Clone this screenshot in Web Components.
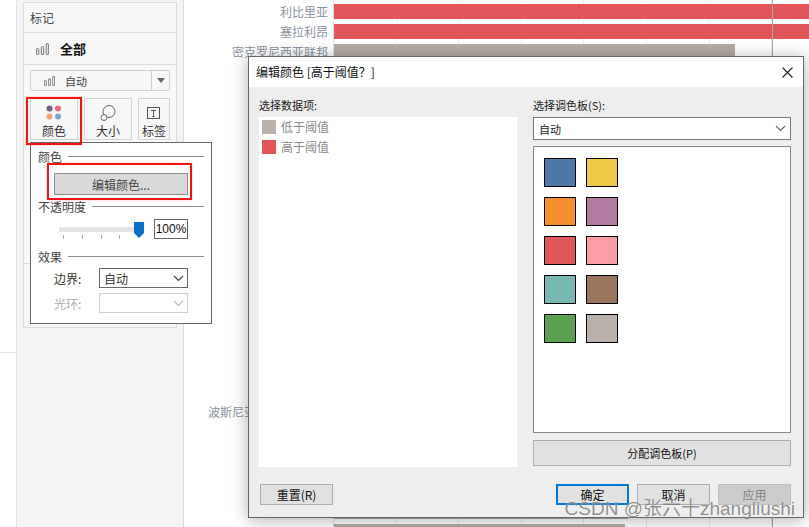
<!DOCTYPE html>
<html lang="zh">
<head>
<meta charset="utf-8">
<title>编辑颜色</title>
<style>
    html, body { margin: 0; height: 100%; overflow: hidden; background: #fff; }
    body { font-family: "Noto Sans CJK SC", "Liberation Sans", sans-serif; font-size: 12px; color: #222; }
</style>
</head>
<body>
<viz-workspace>
    <marks-panel slot="panel"></marks-panel>
    <bar-chart slot="chart"></bar-chart>
    <color-popup slot="popup"></color-popup>
    <edit-dialog slot="dialog"></edit-dialog>
</viz-workspace>

<script>
const BAR_ICON = `<svg width="13" height="12" viewBox="0 0 13 12" fill="none" stroke="#8a8a8a" stroke-width="1.2">
    <rect x="0.6" y="5.5" width="2.2" height="6" rx="1.1"/><rect x="5.4" y="3.5" width="2.2" height="8" rx="1.1"/><rect x="10.2" y="0.6" width="2.2" height="10.9" rx="1.1"/></svg>`;

function chevron(color) {
    return `<svg width="11" height="7" viewBox="0 0 11 7" fill="none" stroke="${color}" stroke-width="1.2"><path d="M1 1l4.5 4.5L10 1"/></svg>`;
}

class VizWorkspace extends HTMLElement {
    constructor() {
        super();
        this.attachShadow({ mode: 'open' });
        this.shadowRoot.innerHTML = `
            <style>
                :host { display: flex; position: relative; width: 809px; height: 527px; overflow: hidden; background: #fff; }
                .gutter { width: 16px; flex: none; position: relative; }
                .gutter i { position: absolute; left: 0; right: 0; top: 352px; border-top: 1px solid #e6e6e6; }
                .over { position: absolute; }
                .popup { left: 30px; top: 142px; }
                .dialog { left: 248px; top: 56px; }
                .red { border: 2px solid #f01414; box-sizing: border-box; box-shadow: 0 0 1px rgba(240,20,20,.6); }
                .r1 { left: 26px; top: 97px; width: 56px; height: 48px; }
                .r2 { left: 47px; top: 163px; width: 145px; height: 37px; }
                .mark { right: 14px; bottom: 6px; font: 19px "Liberation Sans", "Noto Sans CJK SC", sans-serif; line-height: 24px; color: rgba(70,70,70,.6); white-space: nowrap; text-shadow: 0 0 1px rgba(255,255,255,.8); }
            </style>
            <div class="gutter"><i></i></div>
            <slot name="panel"></slot>
            <slot name="chart"></slot>
            <div class="over popup"><slot name="popup"></slot></div>
            <div class="over dialog"><slot name="dialog"></slot></div>
            <div class="over red r1"></div>
            <div class="over red r2"></div>
            <div class="over mark">CSDN @张六十zhangliushi</div>
        `;
    }
}

class MarkButton extends HTMLElement {
    constructor() {
        super();
        this.attachShadow({ mode: 'open' });
        this.shadowRoot.innerHTML = `
            <style>
                :host { display: flex; flex-direction: column; align-items: center; box-sizing: border-box; height: 42px; border: 1px solid #d4d4d4; background: #f7f7f7; color: #333; font-size: 12px; }
                .ic { height: 25px; display: flex; align-items: center; justify-content: center; padding-top: 3px; box-sizing: border-box; }
                .tx { line-height: 13px; white-space: nowrap; }
            </style>
            <div class="ic"><slot name="icon"></slot></div>
            <div class="tx"><slot></slot></div>
        `;
    }
}

class MarksPanel extends HTMLElement {
    constructor() {
        super();
        this.attachShadow({ mode: 'open' });
        this.shadowRoot.innerHTML = `
            <style>
                :host { display: block; flex: none; box-sizing: border-box; width: 168px; height: 527px; padding: 2px 6px 0; background: #f4f4f4; border-left: 1px solid #e2e2e2; border-right: 1px solid #dcdcdc; }
                .card { border: 1px solid #dcdcdc; background: #f8f8f8; }
                .title { height: 29px; display: flex; align-items: center; padding-left: 6px; border-bottom: 1px solid #dcdcdc; color: #444; font-size: 12px; }
                .all { height: 31px; display: flex; align-items: center; padding-left: 12px; gap: 11px; border-bottom: 1px solid #dcdcdc; font-weight: 700; font-size: 13px; color: #111; }
                .marks { height: 199px; box-sizing: border-box; padding: 5px 6px 0; border-bottom: 1px solid #dcdcdc; }
                .type { height: 21px; display: flex; align-items: center; border: 1px solid #d0d0d0; border-radius: 2px; background: #f7f7f7; color: #444; font-size: 11px; box-sizing: border-box; margin-bottom: 7px; }
                .type .l { flex: 1; display: flex; align-items: center; gap: 9px; padding-left: 12px; }
                .type svg { transform: scale(.85); }
                .type .c { width: 17px; height: 100%; border-left: 1px solid #d0d0d0; display: flex; align-items: center; justify-content: center; }
                .type .c i { border: 4px solid transparent; border-top: 5px solid #666; border-bottom: 0; }
                .btns { display: grid; grid-template-columns: 48px 48px 32px; column-gap: 6px; }
                .rest { height: 63px; }
            </style>
            <div class="card">
                <div class="title">标记</div>
                <div class="all">${BAR_ICON}<span>全部</span></div>
                <div class="marks">
                    <div class="type">
                        <div class="l">${BAR_ICON}<span>自动</span></div>
                        <div class="c"><i></i></div>
                    </div>
                    <div class="btns">
                        <mark-button>
                            <svg slot="icon" width="16" height="16" viewBox="0 0 16 16"><circle cx="3.5" cy="3.5" r="3" fill="#76608a"/><circle cx="12" cy="3.5" r="3" fill="#ee6a80"/><circle cx="3.5" cy="11.5" r="3" fill="#eda377"/><circle cx="12" cy="11.5" r="3" fill="#7ba3cc"/></svg>
                            颜色
                        </mark-button>
                        <mark-button>
                            <svg slot="icon" width="16" height="16" viewBox="0 0 16 16" fill="#f7f7f7" stroke="#666" stroke-width="1"><circle cx="9" cy="6.5" r="6"/><circle cx="4" cy="12.5" r="3"/></svg>
                            大小
                        </mark-button>
                        <mark-button>
                            <svg slot="icon" width="14" height="14" viewBox="0 0 14 14" fill="none" stroke="#555"><rect x="0.5" y="1.5" width="12" height="11"/><path d="M4 4.5h5M6.5 4.5v6M5.3 10.5h2.4"/></svg>
                            标签
                        </mark-button>
                    </div>
                </div>
                <div class="rest"></div>
            </div>
        `;
    }
}

class BarChart extends HTMLElement {
    constructor() {
        super();
        this.attachShadow({ mode: 'open' });
        const rows = [];
        const data = { 0: ['利比里亚', 475, 'r'], 1: ['塞拉利昂', 475, 'r'], 2: ['密克罗尼西亚联邦', 401, 'g'], 20: ['波斯尼亚和黑塞哥维那', 300, 'g'], 25: ['', 294, 'g'], 26: ['', 291, 'g'] };
        for (let i = 0; i < 27; i++) {
            const d = data[i] || ['', 0, 'g'];
            rows.push(`<div class="row"><div class="lb">${d[0]}</div><div class="bar ${d[2]}" style="width:${d[1]}px"></div></div>`);
        }
        this.shadowRoot.innerHTML = `
            <style>
                :host { display: block; position: relative; isolation: isolate; flex: 1; height: 527px; overflow: hidden; }
                .plot { position: absolute; left: 149px; right: 0; top: 0; bottom: 0; border-left: 1px solid #e4e4e4; background: repeating-linear-gradient(90deg, transparent 0, transparent 61.6px, #ececec 61.6px, #ececec 62.6px); }
                .ref { position: absolute; left: 588px; top: 0; bottom: 0; border-left: 1px solid #a8a8a8; z-index: 2; }
                .rows { position: relative; padding-top: 4px; }
                .row { display: flex; align-items: flex-start; height: 20px; gap: 6px; }
                .lb { width: 144px; flex: none; text-align: right; color: #8a93a0; font-size: 12px; line-height: 15px; white-space: nowrap; direction: rtl; }
                .bar { height: 15px; }
                .r { background: #e15759; }
                .g { background: #b5aca7; }
            </style>
            <div class="plot"></div>
            <div class="ref"></div>
            <div class="rows">${rows.join('')}</div>
        `;
    }
}

class PopupLegend extends HTMLElement {
    constructor() {
        super();
        this.attachShadow({ mode: 'open' });
        this.shadowRoot.innerHTML = `
            <style>
                :host { display: flex; align-items: center; gap: 6px; height: 12px; font-size: 12px; color: #444; }
                i { flex: 1; border-top: 1px solid #8c8c8c; }
            </style>
            <slot></slot><i></i>
        `;
    }
}

class PopupSelect extends HTMLElement {
    constructor() {
        super();
        this.attachShadow({ mode: 'open' });
        const off = this.hasAttribute('disabled');
        this.shadowRoot.innerHTML = `
            <style>
                :host { display: flex; align-items: center; justify-content: space-between; box-sizing: border-box; width: 89px; height: 20px; padding: 0 3px 0 4px; background: #fff; border: 1px solid ${off ? '#ccc' : '#666'}; color: #333; font-size: 12px; }
            </style>
            <span><slot></slot></span>${chevron(off ? '#bbb' : '#444')}
        `;
    }
}

class ColorPopup extends HTMLElement {
    constructor() {
        super();
        this.attachShadow({ mode: 'open' });
        this.shadowRoot.innerHTML = `
            <style>
                :host { display: block; box-sizing: border-box; width: 182px; height: 182px; padding: 7px 7px 0; background: #fff; border: 1px solid #666; }
                .edit { box-sizing: border-box; width: 134px; height: 22px; margin: 11px 0 5px 16px; display: flex; align-items: center; justify-content: center; background: #d9d9d9; border: 1px solid #8f8f8f; color: #444; font-size: 12px; }
                .op { display: flex; height: 20px; margin: 7px 0 11px; }
                .slider { position: relative; width: 116px; }
                .track { position: absolute; left: 21px; top: 8px; width: 77px; height: 3px; background: #e2e2e2; border: 1px solid #e6e6e6; }
                .tick { position: absolute; top: 16px; height: 4px; border-left: 1px solid #aaa; }
                .thumb { position: absolute; left: 96px; top: 3px; }
                .pct { box-sizing: border-box; width: 34px; height: 20px; border: 1px solid #666; display: flex; align-items: center; justify-content: center; font: 12px "Liberation Sans", sans-serif; color: #111; }
                .line { display: flex; align-items: center; margin: 0 0 5px 16px; font-size: 12px; }
                .line span { width: 45px; color: #333; }
                .line.off span { color: #aaa; }
                .effect { margin-bottom: 6px; }
            </style>
            <popup-legend>颜色</popup-legend>
            <div class="edit">编辑颜色...</div>
            <popup-legend>不透明度</popup-legend>
            <div class="op">
                <div class="slider">
                    <div class="track"></div>
                    <i class="tick" style="left:25px"></i><i class="tick" style="left:44px"></i><i class="tick" style="left:63px"></i><i class="tick" style="left:81px"></i>
                    <svg class="thumb" width="10" height="16" viewBox="0 0 10 16"><path d="M0 0h10v11l-5 5-5-5z" fill="#0a6fc9"/></svg>
                </div>
                <div class="pct">100%</div>
            </div>
            <popup-legend class="effect">效果</popup-legend>
            <div class="line"><span>边界:</span><popup-select>自动</popup-select></div>
            <div class="line off"><span>光环:</span><popup-select disabled></popup-select></div>
        `;
    }
}

class DlgButton extends HTMLElement {
    constructor() {
        super();
        this.attachShadow({ mode: 'open' });
        this.shadowRoot.innerHTML = `
            <style>
                :host { display: flex; align-items: center; justify-content: center; box-sizing: border-box; width: 73px; height: 21px; background: #e1e1e1; border: 1px solid #adadad; color: #111; font-size: 12px; white-space: nowrap; }
                :host([primary]) { border: 2px solid #0078d7; }
                :host([disabled]) { background: #ccc; border-color: #bfbfbf; color: #838383; }
                :host([wide]) { width: 100%; height: 26px; font-size: 11px; }
            </style>
            <slot></slot>
        `;
    }
}

class PaletteSwatch extends HTMLElement {
    constructor() {
        super();
        this.attachShadow({ mode: 'open' });
        this.shadowRoot.innerHTML = `
            <style>
                :host { display: block; box-sizing: border-box; width: 32px; height: 29px; border: 1px solid #000; background: ${this.getAttribute('color')}; }
            </style>
        `;
    }
}

class LegendItem extends HTMLElement {
    constructor() {
        super();
        this.attachShadow({ mode: 'open' });
        this.shadowRoot.innerHTML = `
            <style>
                :host { display: flex; align-items: center; gap: 5px; height: 14px; margin-bottom: 6px; color: #8a8a8a; font-size: 12px; }
                i { width: 14px; height: 14px; background: ${this.getAttribute('color')}; }
                span { padding-bottom: 2px; }
            </style>
            <i></i><span><slot></slot></span>
        `;
    }
}

class EditDialog extends HTMLElement {
    constructor() {
        super();
        this.attachShadow({ mode: 'open' });
        const colors = ['#4e79a7', '#edc948', '#f28e2b', '#b07aa1', '#e15759', '#ff9da7', '#76b7b2', '#9c755f', '#59a14f', '#bab0ac'];
        this.shadowRoot.innerHTML = `
            <style>
                :host { display: block; box-sizing: border-box; width: 556px; height: 462px; background: #eee; border: 1px solid #666; box-shadow: 0 2px 16px rgba(0,0,0,.32); }
                .head { height: 30px; background: #fff; display: flex; align-items: center; justify-content: space-between; padding: 0 10px 0 7px; font-size: 12px; color: #111; }
                .head span { padding-bottom: 2px; }
                .body { padding: 12px 12px 0 10px; }
                .cols { display: grid; grid-template-columns: 258px 258px; column-gap: 16px; }
                .lbl { height: 18px; line-height: 13px; font-size: 11px; color: #222; white-space: nowrap; }
                .list { box-sizing: border-box; height: 350px; background: #fff; padding: 3px; }
                .sel { box-sizing: border-box; height: 23px; background: #fff; border: 1px solid #7a7a7a; display: flex; align-items: center; justify-content: space-between; padding: 0 4px 0 5px; font-size: 11px; color: #222; margin-bottom: 6px; }
                .pal { box-sizing: border-box; height: 287px; background: #fff; border: 1px solid #868a8e; padding: 11px 10px; display: grid; grid-template-columns: 32px 32px; grid-auto-rows: 29px; column-gap: 10px; row-gap: 10px; margin-bottom: 7px; }
                .foot { display: flex; gap: 8px; padding: 17px 0 0 1px; }
                .sp { flex: 1; }
            </style>
            <div class="head">
                <span>编辑颜色 [高于阈值？]</span>
                <svg width="11" height="11" viewBox="0 0 11 11" stroke="#222" stroke-width="1.1"><path d="M0.5 0.5l10 10M10.5 0.5l-10 10"/></svg>
            </div>
            <div class="body">
                <div class="cols">
                    <div>
                        <div class="lbl">选择数据项:</div>
                        <div class="list">
                            <legend-item color="#bab0ac">低于阈值</legend-item>
                            <legend-item color="#e15759">高于阈值</legend-item>
                        </div>
                    </div>
                    <div>
                        <div class="lbl">选择调色板(S):</div>
                        <div class="sel"><span>自动</span>${chevron('#666')}</div>
                        <div class="pal">${colors.map(c => `<palette-swatch color="${c}"></palette-swatch>`).join('')}</div>
                        <dlg-button wide>分配调色板(P)</dlg-button>
                    </div>
                </div>
                <div class="foot">
                    <dlg-button>重置(R)</dlg-button>
                    <div class="sp"></div>
                    <dlg-button primary>确定</dlg-button>
                    <dlg-button>取消</dlg-button>
                    <dlg-button disabled>应用</dlg-button>
                </div>
            </div>
        `;
    }
}

customElements.define('viz-workspace', VizWorkspace);
customElements.define('mark-button', MarkButton);
customElements.define('marks-panel', MarksPanel);
customElements.define('bar-chart', BarChart);
customElements.define('popup-legend', PopupLegend);
customElements.define('popup-select', PopupSelect);
customElements.define('color-popup', ColorPopup);
customElements.define('dlg-button', DlgButton);
customElements.define('palette-swatch', PaletteSwatch);
customElements.define('legend-item', LegendItem);
customElements.define('edit-dialog', EditDialog);
</script>
</body>
</html>
